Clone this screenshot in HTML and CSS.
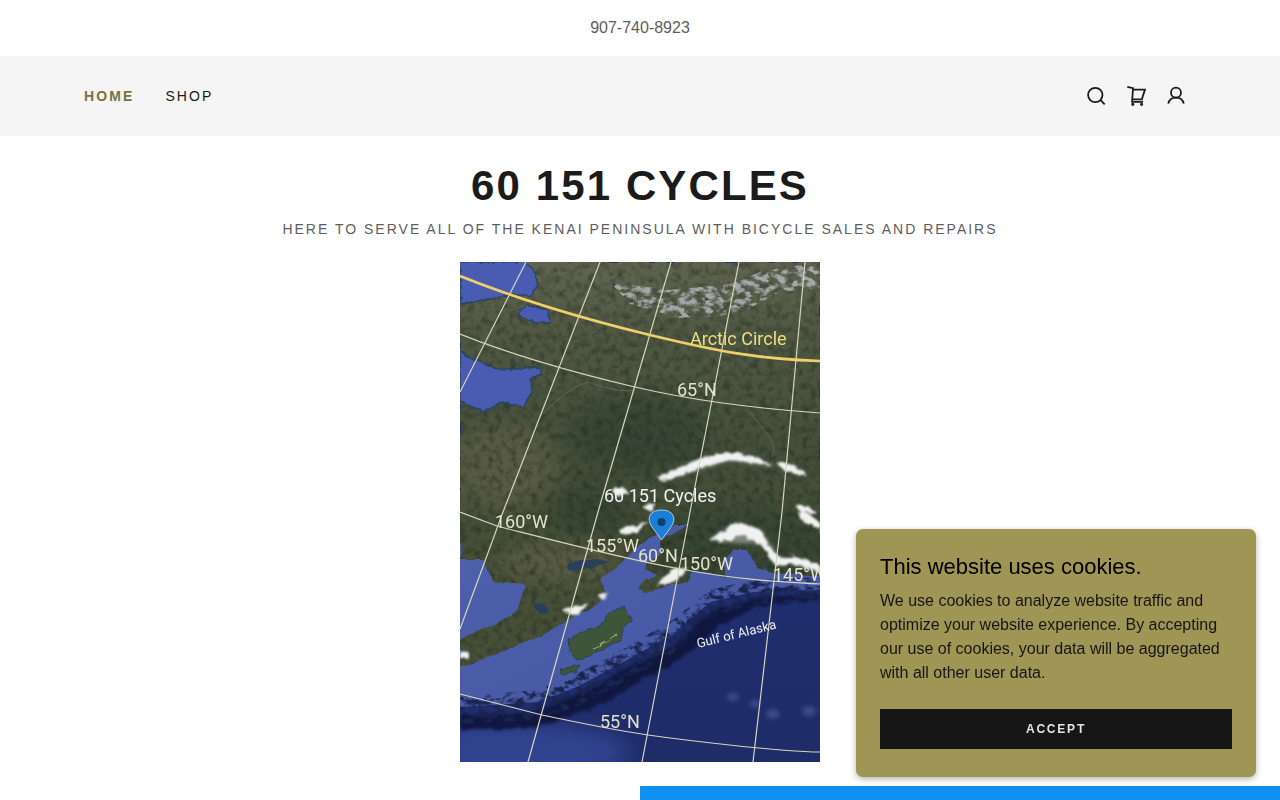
FILE: index.html
```html
<!DOCTYPE html>
<html lang="en">
<head>
  <meta charset="UTF-8" />
  <meta name="viewport" content="width=device-width, initial-scale=1.0" />
  <title>60 151 Cycles</title>
  <link rel="stylesheet" href="styles.css">
</head>
<body>
  <div class="topbar">907-740-8923</div>

  <nav class="nav">
    <div class="nav-links">
      <a href="#" class="active">HOME</a>
      <a href="#">SHOP</a>
    </div>
    <div class="nav-icons">
      <svg viewBox="0 0 20 20" aria-label="Search"><circle cx="9.300" cy="9" r="7.200"/><path d="M14.500 14.200l4.200 4.200"/></svg>
      <svg viewBox="0 0 20 20" aria-label="Cart"><path d="M1.300.9L7 2.200 6.100 15.800H17M7 3.600H19L15.800 13.300H6.500"/><circle cx="6.800" cy="18.300" r=".7"/><circle cx="15.600" cy="18.300" r=".7"/></svg>
      <svg viewBox="0 0 20 20" aria-label="Account"><circle cx="10" cy="6.700" r="5"/><path d="M2.300 17.600C3 14 6 11.600 10 11.600S17 14 17.700 17.600"/></svg>
    </div>
  </nav>

  <header class="hero">
    <h1>60 151 CYCLES</h1>
    <p>HERE TO SERVE ALL OF THE KENAI PENINSULA WITH BICYCLE SALES AND REPAIRS</p>
  </header>

  <div class="map">
    <svg viewBox="0 0 360 500" width="360" height="500">
      <defs>
        <linearGradient id="land" x1="0" y1="0" x2="0" y2="1">
          <stop offset="0" stop-color="#5f6450"/>
          <stop offset=".15" stop-color="#4f5843"/>
          <stop offset=".4" stop-color="#434f3a"/>
          <stop offset=".6" stop-color="#465038"/>
        </linearGradient>
        <linearGradient id="shelf" x1="0" y1="0" x2="1" y2="1">
          <stop offset="0" stop-color="#4f61ae"/>
          <stop offset="1" stop-color="#44569f"/>
        </linearGradient>
        <linearGradient id="deep" x1="0" y1="0" x2="0" y2="1">
          <stop offset="0" stop-color="#22317a"/>
          <stop offset="1" stop-color="#1e2c68"/>
        </linearGradient>
        <filter id="blur2" color-interpolation-filters="sRGB"><feGaussianBlur stdDeviation="2"/></filter>
        <filter id="blur10" color-interpolation-filters="sRGB" x="-30%" y="-30%" width="160%" height="160%"><feGaussianBlur stdDeviation="10"/></filter>
        <filter id="land-tex" color-interpolation-filters="sRGB" x="0" y="0" width="100%" height="100%">
          <feTurbulence type="fractalNoise" baseFrequency=".05" numOctaves="3" seed="3" result="n"/>
          <feDisplacementMap in="SourceGraphic" in2="n" scale="6" xChannelSelector="R" yChannelSelector="G" result="d"/>
          <feTurbulence type="fractalNoise" baseFrequency=".14" numOctaves="4" seed="8"/>
          <feColorMatrix values="0 0 0 0 .1  0 0 0 0 .13  0 0 0 0 .08  .7 .7 0 0 -.62" result="g"/>
          <feComposite in="g" in2="d" operator="in" result="gc"/>
          <feMerge><feMergeNode in="d"/><feMergeNode in="gc"/></feMerge>
        </filter>
        <filter id="coast" color-interpolation-filters="sRGB" x="-5%" y="-5%" width="110%" height="110%">
          <feTurbulence type="fractalNoise" baseFrequency=".12" numOctaves="3" seed="4" result="n"/>
          <feDisplacementMap in="SourceGraphic" in2="n" scale="5" xChannelSelector="R" yChannelSelector="G"/>
          <feGaussianBlur stdDeviation=".5"/>
        </filter>
        <filter id="snowy" color-interpolation-filters="sRGB" x="-10%" y="-10%" width="120%" height="120%">
          <feTurbulence type="fractalNoise" baseFrequency=".16" numOctaves="3" seed="5" result="n"/>
          <feDisplacementMap in="SourceGraphic" in2="n" scale="6" xChannelSelector="R" yChannelSelector="G"/>
          <feGaussianBlur stdDeviation=".9"/>
        </filter>
        <filter id="mottle" color-interpolation-filters="sRGB" x="-5%" y="-5%" width="110%" height="110%">
          <feTurbulence type="fractalNoise" baseFrequency=".11 .16" numOctaves="4" seed="12"/>
          <feColorMatrix values="0 0 0 0 0  0 0 0 0 0  0 0 0 0 0  3 3 0 0 -2.700" result="a"/>
          <feComposite in="SourceGraphic" in2="a" operator="in"/>
          <feGaussianBlur stdDeviation=".7"/>
        </filter>
        <filter id="ridge" color-interpolation-filters="sRGB" x="-5%" y="-5%" width="110%" height="110%">
          <feTurbulence type="fractalNoise" baseFrequency=".09" numOctaves="3" seed="11" result="n"/>
          <feDisplacementMap in="SourceGraphic" in2="n" scale="9" xChannelSelector="R" yChannelSelector="G"/>
          <feGaussianBlur stdDeviation="1.500"/>
        </filter>
        <clipPath id="land-clip">
          <path d="M0 0H360V315L317 311 297 305 287 288 273 288 263 300 267 315 253 312 233 310 227 320 207 325 187 330 178 325 187 317 197 313 185 307 187 300 203 290 200 277 213 272 228 263 213 263 200 277 197 273 180 283 163 300 140 317 147 330 140 340 123 350 100 363 73 377 43 390 0 405V377L33 363 57 350 65 322 43 320 35 322 23 297 0 297Z"/>
        </clipPath>
      </defs>

      <!-- sea -->
      <rect width="360" height="500" fill="url(#deep)"/>
      <ellipse class="deep-lift" cx="40" cy="490" rx="130" ry="30" filter="url(#blur10)"/>
      <path fill="url(#shelf)" d="M0 250H360V328L293 330 250 340 213 372 167 398 117 425 77 440 0 445Z"/>
      <path class="ridge-dark" filter="url(#ridge)" d="M0 452L77 450 117 432 167 406 213 385 250 350 293 336 360 332V337L300 344 262 362 225 395 175 422 125 450 75 466 0 468Z"/>
      <path class="ridge-mottle" filter="url(#mottle)" d="M0 435L77 428 117 412 167 385 213 358 250 328 293 318 360 315V340L293 342 250 356 213 392 167 418 117 445 77 458 0 462Z"/>

      <!-- land -->
      <g filter="url(#land-tex)">
        <g clip-path="url(#land-clip)">
          <rect width="360" height="500" fill="url(#land)"/>
          <ellipse class="brownish" cx="45" cy="205" rx="55" ry="42" filter="url(#blur10)"/>
          <ellipse class="brownish" cx="100" cy="300" rx="60" ry="20" filter="url(#blur10)"/>
          <ellipse class="dark-green" cx="280" cy="285" rx="100" ry="40" filter="url(#blur10)"/>
          <ellipse class="dark-green" cx="180" cy="170" rx="70" ry="40" filter="url(#blur10)"/>
          <ellipse class="dark-green" cx="130" cy="250" rx="40" ry="25" filter="url(#blur10)"/>
        </g>
      </g>
      <path class="range" filter="url(#mottle)" d="M150 20L210 28 270 22 300 10 360 0V26L320 30 290 46 260 54 220 56 170 42Z"/>

      <path class="river" d="M80 155C95 140 110 125 128 120 150 128 165 130 175 128M290 150C305 170 318 180 312 195"/>

      <!-- water inside the land -->
      <g filter="url(#coast)">
        <path class="water" d="M0 0H65L75 10 78 23 72 33 50 33 30 37 0 42Z"/>
        <path class="water" d="M58 50L67 43 87 48 90 62 75 60 62 55Z"/>
        <path class="water" d="M0 90L20 100 43 108 80 105 82 113 70 117 73 130 63 145 43 140 23 150 0 140Z"/>
        <path class="lake" d="M107 302C120 296 140 296 150 299 140 306 120 310 108 308Z"/>
        <path class="lake" d="M74 344C78 338 90 344 90 350 84 354 76 350 74 344Z"/>
        <path class="kodiak" d="M108 377L120 370 140 365 147 353 163 345 173 358 163 365 160 378 143 387 130 393 117 398 110 390Z"/>
        <path class="kodiak" d="M100 407L120 403 115 410 103 412Z"/>
        <path class="island-ridge" d="M133 387L157 373"/>
      </g>

      <!-- snow -->
      <g id="snow-halo" class="snow-halo" filter="url(#blur2)">
        <path d="M197 216L240 197 280 192 313 204 270 198 225 212Z"/>
        <path d="M250 277L277 260 300 268 322 298 360 303V310L333 302 300 282 262 280Z"/>
      </g>
      <g class="snow" filter="url(#snowy)">
        <path d="M197 216L222 204 240 197 257 192 280 192 300 197 313 204 296 201 270 198 245 204 225 212 205 219Z"/>
        <path d="M317 200L332 203 347 213 334 212 322 206Z"/>
        <path d="M335 243L350 245 358 252 342 250Z"/>
        <path d="M150 228L162 224 170 232 158 234Z"/>
        <path d="M182 244L196 240 192 250Z"/>
        <path d="M157 267L187 260 177 270 162 272Z"/>
        <path d="M250 277L262 270 277 260 300 268 310 285 322 298 333 293 360 303V310L333 302 315 303 300 282 282 272 262 280Z"/>
        <path d="M337 250L350 252 360 262V268L345 260Z"/>
        <path d="M197 323L213 307 227 306 219 317 205 323Z"/>
        <path d="M103 347L128 342 118 353 108 352Z"/>
        <path d="M137 333L148 330 143 338Z"/>
        <path d="M0 390L8 391 8 396 0 396Z"/>
      </g>

      <!-- seamounts -->
      <g filter="url(#blur2)">
        <ellipse class="seamount" cx="273" cy="435" rx="6" ry="4"/>
        <ellipse class="seamount" cx="295" cy="442" rx="5" ry="4"/>
        <ellipse class="seamount" cx="313" cy="452" rx="7" ry="5"/>
        <ellipse class="seamount" cx="349" cy="449" rx="7" ry="5"/>
      </g>

      <!-- grid -->
      <g class="lines">
        <path d="M0 72C60 96 120 112 175 125S290 146 360 151"/>
        <path d="M0 250L37 264C100 280 160 296 220 307S320 320 360 322"/>
        <path d="M0 432L82 453C120 461 160 469 188 473S320 490 360 490"/>
        <path d="M66 0L0 130"/>
        <path d="M140 0L43 250 0 367"/>
        <path d="M211 0L138 250 68 500"/>
        <path d="M279 0L230 250 182 500"/>
        <path d="M345 0L322 250 293 500"/>
      </g>
      <path class="arctic" d="M0 14C60 38 120 56 190 73S300 97 360 99"/>

      <g class="labels">
        <text class="lb-arctic" x="230" y="83">Arctic Circle</text>
        <text x="217" y="134">65°N</text>
        <text x="144" y="240" class="lb-name">60 151 Cycles</text>
        <text x="35" y="266">160°W</text>
        <text x="126" y="290">155°W</text>
        <text x="178" y="300">60°N</text>
        <text x="220" y="308">150°W</text>
        <text x="313" y="319">145°W</text>
        <text x="140" y="466">55°N</text>
        <text class="lb-gulf" transform="translate(238 386) rotate(-14)">Gulf of Alaska</text>
      </g>

      <path class="pin" d="M201.500 278L192 265C186 256 190 248 201.500 248S217 256 211 265Z"/>
      <circle class="pin-dot" cx="201.500" cy="260" r="4"/>
    </svg>
  </div>

  <div class="blue-strip"></div>

  <aside class="cookies">
    <h4>This website uses cookies.</h4>
    <p>We use cookies to analyze website traffic and optimize your website experience. By accepting our use of cookies, your data will be aggregated with all other user data.</p>
    <button>ACCEPT</button>
  </aside>
</body>
</html>
```

FILE: styles.css
```css
body {
  margin: 0;
  font-family: "Liberation Sans", Arial, sans-serif;
  background-color: #fff;
  height: 800px;
  overflow: hidden;
}
.topbar {
  height: 56px;
  display: flex;
  justify-content: center;
  align-items: center;
  font-size: 16px;
  color: #5e5e5e;
}
.nav {
  height: 80px;
  background-color: #f5f5f5;
  display: flex;
  justify-content: space-between;
  align-items: center;
  padding: 0 94px 0 84px;
}
.nav-links {
  display: flex;
  gap: 31px;
}
.nav-links a {
  font-size: 14px;
  letter-spacing: 2.100px;
  color: #1b1b1b;
  text-decoration: none;
}
.nav-links a.active {
  color: #77733f;
  font-weight: bold;
}
.nav-icons {
  display: flex;
  gap: 20px;
}
.nav-icons svg {
  width: 20px;
  height: 20px;
  fill: none;
  stroke: #1b1b1b;
  stroke-width: 1.800;
}
.hero {
  text-align: center;
}
.hero h1 {
  margin: 0;
  padding-top: 26px;
  font-size: 42px;
  line-height: 48px;
  letter-spacing: 2.100px;
  color: #1b1b1b;
}
.hero p {
  margin: 8px 0 0;
  font-size: 14px;
  line-height: 22px;
  letter-spacing: 2px;
  color: #5e5e5e;
}
.map {
  margin-top: 22px;
  display: flex;
  justify-content: center;
}
.map svg {
  display: block;
}
.deep-lift { fill: #31438f; }
.ridge-dark { fill: #10173f; }
.ridge-mottle { fill: #1a2450; }
.water { fill: #4a5cb2; stroke: #2a4560; stroke-width: 1.500; }
.lake { fill: #2a3f58; }
.range { fill: #a4a8a8; }
.brownish { fill: #6a664c; opacity: .55; }
.dark-green { fill: #2f4030; opacity: .6; }
.river { fill: none; stroke: #7f8a6e; stroke-width: .7; opacity: .6; }
.kodiak { fill: #3f5538; stroke: #2c4050; stroke-width: 1; }
.island-ridge { fill: none; stroke: #a5ad96; stroke-width: 1; }
.snow path { fill: #f0f2f2; }
.snow-halo path { fill: #b8bdb8; opacity: .6; }
.seamount { fill: #5a6aa4; opacity: .5; }
.lines path { fill: none; stroke: #d8d6bd; stroke-width: 1.200; }
.arctic { fill: none; stroke: #f0cf6c; stroke-width: 2.600; }
.labels text {
  font-family: Roboto, sans-serif;
  font-size: 18px;
  fill: #e6e2cc;
}
.labels .lb-arctic { fill: #ecdf7a; }
.labels .lb-name { fill: #f3f3f3; }
.labels .lb-gulf { font-size: 13px; fill: #eef0f6; }
.pin { fill: #1a7fd8; stroke: #d5e6f2; stroke-width: .8; }
.pin-dot { fill: #10406e; }
.blue-strip {
  position: fixed;
  left: 640px;
  right: 0;
  bottom: 0;
  height: 14px;
  background-color: #1090f0;
}
.cookies {
  position: fixed;
  right: 24px;
  bottom: 23px;
  width: 352px;
  height: 200px;
  padding: 24px;
  background-color: #9f9555;
  border-radius: 7px;
  box-shadow: 0 2px 6px 0 rgba(0,0,0,0.3);
  color: #161616;
}
.cookies h4 {
  margin: 0;
  font-size: 22px;
  font-weight: normal;
  line-height: 28px;
  color: #000;
}
.cookies p {
  margin: 8px 0 0;
  font-size: 16px;
  line-height: 24px;
}
.cookies button {
  display: block;
  width: 100%;
  height: 40px;
  margin-top: 24px;
  background-color: #161616;
  color: #e4e4e4;
  border: none;
  font-family: inherit;
  font-size: 12px;
  font-weight: bold;
  letter-spacing: 1.800px;
}
```
